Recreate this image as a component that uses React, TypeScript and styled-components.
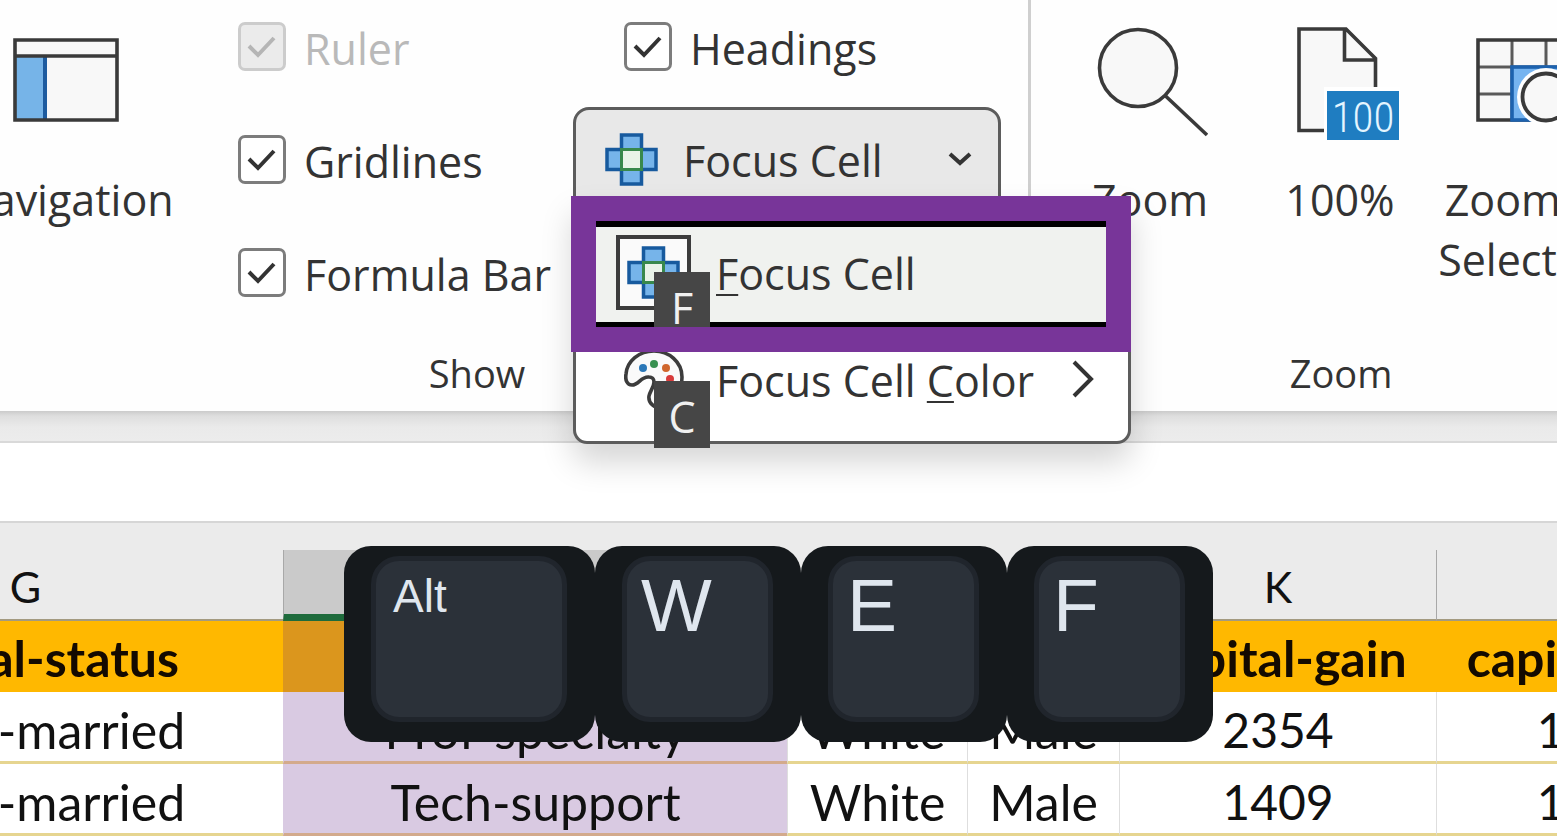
import React from 'react';
import styled, { createGlobalStyle } from 'styled-components';

const GlobalStyle = createGlobalStyle`
  *, *::before, *::after { box-sizing: border-box; }
  body {
    margin: 0;
    background: #fff;
    overflow: hidden;
    font-family: "Open Sans", "Noto Sans", sans-serif;
    color: #333;
  }
  button, input { font: inherit; color: inherit; }
`;

const Page = styled.main`
  min-height: 100vh;
  overflow: hidden;
`;

/* Ribbon, scrolled a little to the right */
const Ribbon = styled.header`
  display: flex;
  margin-left: -74px;
  background: #fefefe;
`;

const Group = styled.section<{ $width: number; $divided?: boolean }>`
  flex: none;
  width: ${p => p.$width}px;
  display: flex;
  flex-direction: column;
  border-right: ${p => (p.$divided ? '3px solid #cfcfcf' : 'none')};
`;

const GroupBody = styled.div<{ $indent: number }>`
  flex: 1;
  display: flex;
  align-items: flex-start;
  padding: 22px 0 46px ${p => p.$indent}px;
`;

const GroupName = styled.h2`
  margin: 0;
  padding-bottom: 8px;
  font-size: 38px;
  font-weight: 400;
  line-height: 60px;
  text-align: center;
`;

const BigButton = styled.button<{ $width: number }>`
  flex: none;
  width: ${p => p.$width}px;
  padding: 6px 0 0;
  border: 0;
  background: none;
  display: flex;
  flex-direction: column;
  align-items: center;
  gap: 36px;
  font-size: 43px;
  line-height: 60px;
`;

const BigIcon = styled.span`
  height: 106px;
  display: flex;
  align-items: center;
  svg { display: block; }
`;

const BigLabel = styled.span`
  min-height: 120px;
  white-space: nowrap;
`;

const CheckColumn = styled.div`
  width: 335px;
  margin-left: 64px;
  display: flex;
  flex-direction: column;
  gap: 64px;
`;

const FocusColumn = styled.div`
  width: 428px;
  display: flex;
  flex-direction: column;
  gap: 36px;
`;

const CheckLabel = styled.label<{ $muted?: boolean; $indent?: number }>`
  display: flex;
  align-items: flex-start;
  gap: 18px;
  height: 49px;
  padding-left: ${p => p.$indent ?? 0}px;
  font-size: 43px;
  line-height: 53px;
  white-space: nowrap;
  color: ${p => (p.$muted ? '#b9b9b9' : '#333')};
`;

const CheckFrame = styled.span`
  display: grid;
  > * { grid-area: 1 / 1; }
  svg { pointer-events: none; }
`;

const CheckInput = styled.input`
  appearance: none;
  margin: 0;
  width: 48px;
  height: 49px;
  border: 3px solid #7c7c7c;
  border-radius: 7px;
  background: #fff;
  &:disabled { border-color: #cccccc; background: #ebebeb; }
`;

const Dropdown = styled.div`
  position: relative;
`;

const DropdownButton = styled.button`
  width: 100%;
  height: 113px;
  padding: 0 26px 9px 29px;
  display: flex;
  align-items: center;
  border: 3px solid #5c5c5c;
  border-radius: 16px;
  background: #e8e8e8;
  font-size: 43px;
  line-height: 60px;
  text-align: left;
`;

const DropdownText = styled.span`
  flex: 1;
  padding: 4px 0 0 25px;
`;

const Menu = styled.div`
  position: absolute;
  z-index: 2;
  top: 90px;
  left: 0;
  width: 558px;
  padding: 21px 20px 6px;
  border: 3px solid #5c5c5c;
  border-radius: 0 0 14px 14px;
  background: #fff;
  box-shadow: 0 18px 32px rgba(0, 0, 0, 0.17);
`;

const MenuItem = styled.button<{ $active?: boolean }>`
  position: relative;
  width: 100%;
  height: 107px;
  padding: 0 14px 5px ${p => (p.$active ? 20 : 28)}px;
  border: 0 solid #000;
  border-width: ${p => (p.$active ? '6px 0' : '0')};
  display: flex;
  align-items: center;
  gap: ${p => (p.$active ? 23 : 30)}px;
  background: ${p => (p.$active ? '#f0f2ef' : '#fff')};
  font-size: 43px;
  line-height: 60px;
  text-align: left;
  white-space: nowrap;
  u {
    text-decoration-thickness: 2px;
    text-underline-offset: 4px;
  }
`;

const MenuText = styled.span`
  flex: 1;
  padding: 4px 0 0 2px;
`;

const BoxedIcon = styled.span`
  width: 75px;
  height: 75px;
  display: grid;
  place-items: center;
  border: 4px solid #3c3c3c;
  background: #fafafa;
`;

const KeyTip = styled.kbd<{ $top: number }>`
  position: absolute;
  top: ${p => p.$top}px;
  left: 58px;
  width: 56px;
  height: 67px;
  background: #464646;
  color: #f0f0f0;
  font: 43px/72px "Open Sans", "Noto Sans", sans-serif;
  text-align: center;
`;

const Highlight = styled.div`
  position: absolute;
  z-index: 3;
  top: 89px;
  left: -2px;
  width: 560px;
  height: 156px;
  border: 25px solid #783599;
  pointer-events: none;
`;

const Band = styled.div`
  height: 32px;
  border-bottom: 2px solid #d9d9d9;
  background: linear-gradient(#cbcbcb, #dedede 5px, #eaeaea 16px, #ececec);
`;

const FormulaBar = styled.div`
  height: 80px;
  border-bottom: 2px solid #d6d6d6;
  background: #fff;
`;

const Sheet = styled.section`
  position: relative;
  padding-top: 27px;
  background: #ebebeb;
`;

const Grid = styled.table`
  width: 1981px;
  margin-left: -233px;
  border-collapse: separate;
  border-spacing: 0;
  table-layout: fixed;
  background: #fff;
  color: #111;
  font-family: Lato, "Open Sans", sans-serif;
`;

const ColumnHead = styled.th<{ $selected?: boolean; $line?: boolean }>`
  height: 71px;
  padding: 4px 0 0;
  border-bottom: ${p => (p.$selected ? '7px solid #1e6b3c' : '2px solid #a39a80')};
  border-left: 1px solid ${p => (p.$line || p.$selected ? '#a8a8a8' : 'transparent')};
  background: ${p => (p.$selected ? '#cacaca' : '#ebebeb')};
  font-size: 43px;
  font-weight: 400;
  line-height: 50px;
`;

const FieldHead = styled.td<{ $selected?: boolean }>`
  height: 71px;
  padding: 2px 0 0;
  background: ${p => (p.$selected ? '#db961d' : '#ffb800')};
  color: #140a00;
  font-size: 50px;
  font-weight: 700;
  line-height: 60px;
  text-align: center;
`;

const Cell = styled.td<{ $selected?: boolean; $numeric?: boolean }>`
  height: 72px;
  padding: 6px 0 0;
  border-bottom: 3px solid ${p => (p.$selected ? '#d3aa8c' : '#e6d590')};
  border-left: 1px solid ${p => (p.$selected ? '#d9cae2' : '#dedede')};
  background: ${p => (p.$selected ? '#d9cae2' : '#fff')};
  font-size: ${p => (p.$numeric ? 48 : 50)}px;
  line-height: 60px;
  text-align: center;
  white-space: nowrap;
`;

const Keys = styled.div`
  position: absolute;
  z-index: 4;
  top: 23px;
  left: 0;
  right: 0;
  display: flex;
  justify-content: center;
`;

const Key = styled.kbd<{ $wide?: boolean }>`
  width: ${p => (p.$wide ? 251 : 206)}px;
  height: 196px;
  padding: 10px 28px 20px 27px;
  display: flex;
  border-radius: 27px;
  background: #15191c;
`;

const KeyCap = styled.span<{ $small?: boolean }>`
  flex: 1;
  padding: ${p => (p.$small ? '10px 0 0 17px' : '6px 0 0 14px')};
  border: 5px solid #20252c;
  border-radius: 28px;
  background: #2b3139;
  color: #dfe6ee;
  font-family: "Liberation Sans", Arial, sans-serif;
  font-size: ${p => (p.$small ? 46 : 75)}px;
  line-height: ${p => (p.$small ? 50 : 76)}px;
`;

const BadgeText = styled.text`
  font: 300 43px "Liberation Sans Narrow", "Roboto Condensed", Roboto, sans-serif;
  fill: #e4f5ff;
`;

function CheckOption({ label, disabled, indent }: { label: string; disabled?: boolean; indent?: number }) {
  return (
    <CheckLabel $muted={disabled} $indent={indent}>
      <CheckFrame>
        <CheckInput type="checkbox" defaultChecked disabled={disabled} />
        <svg width="48" height="49" fill="none" stroke={disabled ? '#b5b5b5' : '#333'} strokeWidth="4">
          <path d="M11 24 L20 33 L36 16" />
        </svg>
      </CheckFrame>
      {label}
    </CheckLabel>
  );
}

const CrossIcon = () => (
  <svg width="53" height="53" viewBox="0 0 53 53" strokeWidth="3.5" aria-hidden="true">
    <path d="M16.5 2h20v14.5H51v20H36.500V51h-20V36.500H2v-20h14.500z" fill="#76b4ea" stroke="#175a9e" />
    <rect x="16.500" y="16.500" width="20" height="20" fill="#e9f3e8" stroke="#38884c" strokeWidth="3" />
  </svg>
);

const NavigationIcon = () => (
  <svg width="108" height="86" viewBox="0 0 108 86" aria-hidden="true">
    <rect x="2" y="2" width="102" height="80" fill="#f8f8f8" />
    <rect x="3" y="18" width="28" height="64" fill="#76b4e8" />
    <path d="M32 18v63" stroke="#1d5b9f" strokeWidth="4" />
    <path d="M2 2h102v80H2zM2 18h102" fill="none" stroke="#3a3a3a" strokeWidth="3.6" />
  </svg>
);

const ZoomIcon = () => (
  <svg width="116" height="112" viewBox="-6 -2 116 112" stroke="#3a3a3a" strokeWidth="3.6" aria-hidden="true">
    <path d="M66.500 68 L109 108" fill="none" />
    <circle cx="40" cy="41" r="38.500" fill="#f8f8f8" />
  </svg>
);

const PageIcon = () => (
  <svg width="120" height="118" viewBox="-16 -4 120 118" aria-hidden="true">
    <path d="M3 3h47l30 29v72H3z" fill="#f8f8f8" />
    <path d="M28 104.500H3V3h47l29.500 29.500V61M48.500 3v31h31" fill="none" stroke="#3a3a3a" strokeWidth="3.6" />
    <rect x="28" y="61" width="76" height="53" fill="#fff" />
    <rect x="31" y="65" width="72" height="49" fill="#1f7dc1" />
    <BadgeText x="67" y="106" textAnchor="middle">100</BadgeText>
  </svg>
);

const SelectionIcon = () => (
  <svg width="106" height="86" viewBox="0 0 106 86" fill="none" aria-hidden="true">
    <rect x="2" y="2" width="102" height="80" fill="#f8f8f8" />
    <path d="M36 2v80M70 2v80M2 29h102M2 56h102" stroke="#5a5a5a" strokeWidth="3" />
    <path d="M2 2h102v80H2z" stroke="#3a3a3a" strokeWidth="3.6" />
    <rect x="36" y="29" width="68" height="53" fill="#76b4f0" stroke="#1d62ae" strokeWidth="3.6" />
    <circle cx="70" cy="59" r="29" fill="#fff" />
    <circle cx="70" cy="59" r="23.500" fill="#f8f8f8" stroke="#3a3a3a" strokeWidth="3.8" />
  </svg>
);

const PaletteIcon = () => (
  <svg width="60" height="64" viewBox="0 0 60 64" aria-hidden="true">
    <path
      d="M2 27C3 14 15 4 30 4s28 11 28 26c0 18-10 31-20 31-8 0-14-5-13-12 1-5 5-9 5-14 0-3-2-5-5-5-8-1-10 8-17 8-5 0-7-5-6-11z"
      fill="#fafafa"
      stroke="#3c3c3c"
      strokeWidth="3.6"
    />
    <circle cx="19" cy="21" r="4" fill="#2b78b8" />
    <circle cx="30" cy="17" r="4" fill="#389050" />
    <circle cx="42" cy="21" r="4" fill="#d0662c" />
    <circle cx="46" cy="32" r="4" fill="#d83b3b" />
  </svg>
);

const rows = [
  ['Never-married', 'Prof-specialty', 'White', 'Male', '2354', '1902'],
  ['Never-married', 'Tech-support', 'White', 'Male', '1409', '1902'],
];

export default function App() {
  return (
    <>
      <GlobalStyle />
      <Page>
        <Ribbon>
          <Group $width={1105} $divided>
            <GroupBody $indent={33}>
              <BigButton type="button" $width={215}>
                <BigIcon><NavigationIcon /></BigIcon>
                <BigLabel>Navigation</BigLabel>
              </BigButton>
              <CheckColumn>
                <CheckOption label="Ruler" disabled />
                <CheckOption label="Gridlines" />
                <CheckOption label="Formula Bar" />
              </CheckColumn>
              <FocusColumn>
                <CheckOption label="Headings" indent={51} />
                <Dropdown>
                  <DropdownButton type="button" aria-haspopup="menu" aria-expanded="true">
                    <CrossIcon />
                    <DropdownText>Focus Cell</DropdownText>
                    <svg width="24" height="16" fill="none" stroke="#333" strokeWidth="4" aria-hidden="true">
                      <path d="M2 3l10 9 10-9" />
                    </svg>
                  </DropdownButton>
                  <Menu role="menu">
                    <MenuItem type="button" role="menuitem" $active>
                      <BoxedIcon><CrossIcon /></BoxedIcon>
                      <MenuText><u>F</u>ocus Cell</MenuText>
                      <KeyTip $top={45}>F</KeyTip>
                    </MenuItem>
                    <MenuItem type="button" role="menuitem">
                      <PaletteIcon />
                      <MenuText>Focus Cell <u>C</u>olor</MenuText>
                      <svg width="22" height="38" fill="none" stroke="#333" strokeWidth="4" aria-hidden="true">
                        <path d="M2 2l17 17L2 36" />
                      </svg>
                      <KeyTip $top={53}>C</KeyTip>
                    </MenuItem>
                  </Menu>
                  <Highlight />
                </Dropdown>
              </FocusColumn>
            </GroupBody>
            <GroupName>Show</GroupName>
          </Group>
          <Group $width={620}>
            <GroupBody $indent={24}>
              <BigButton type="button" $width={190}>
                <BigIcon><ZoomIcon /></BigIcon>
                <BigLabel>Zoom</BigLabel>
              </BigButton>
              <BigButton type="button" $width={190}>
                <BigIcon><PageIcon /></BigIcon>
                <BigLabel>100%</BigLabel>
              </BigButton>
              <BigButton type="button" $width={188}>
                <BigIcon><SelectionIcon /></BigIcon>
                <BigLabel>Zoom to<br />Selection</BigLabel>
              </BigButton>
            </GroupBody>
            <GroupName>Zoom</GroupName>
          </Group>
        </Ribbon>
        <Band />
        <FormulaBar />
        <Sheet>
          <Grid>
            <colgroup>
              <col width={516} />
              <col width={504} />
              <col width={180} />
              <col width={152} />
              <col width={317} />
              <col width={312} />
            </colgroup>
            <thead>
              <tr>
                <ColumnHead scope="col">G</ColumnHead>
                <ColumnHead scope="col" $selected />
                <ColumnHead scope="col" />
                <ColumnHead scope="col" />
                <ColumnHead scope="col">K</ColumnHead>
                <ColumnHead scope="col" $line />
              </tr>
            </thead>
            <tbody>
              <tr>
                <FieldHead>marital-status</FieldHead>
                <FieldHead $selected />
                <FieldHead />
                <FieldHead />
                <FieldHead>capital-gain</FieldHead>
                <FieldHead>capital-loss</FieldHead>
              </tr>
              {rows.map((row, r) => (
                <tr key={r}>
                  {row.map((value, c) => (
                    <Cell key={c} $selected={c === 1} $numeric={c > 3}>{value}</Cell>
                  ))}
                </tr>
              ))}
            </tbody>
          </Grid>
          <Keys>
            <Key $wide><KeyCap $small>Alt</KeyCap></Key>
            <Key><KeyCap>W</KeyCap></Key>
            <Key><KeyCap>E</KeyCap></Key>
            <Key><KeyCap>F</KeyCap></Key>
          </Keys>
        </Sheet>
      </Page>
    </>
  );
}
